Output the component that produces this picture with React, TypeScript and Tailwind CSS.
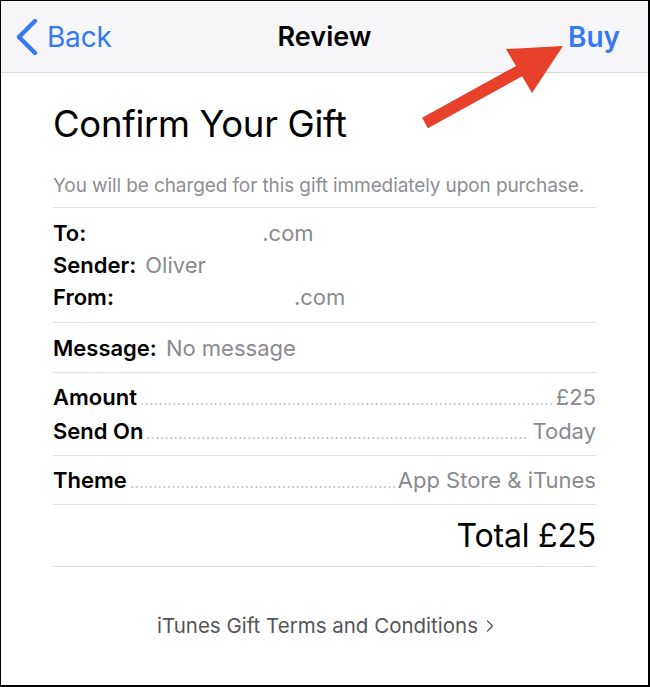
import { ChevronRight } from "lucide-react";

const Leader = () => (
    <span className="mx-[3px] h-[2px] flex-1 bg-[radial-gradient(circle,#b8b8bc_0.8px,transparent_1.15px)] bg-[length:4.6px_2px] bg-repeat-x" />
);

function LeaderRow({ label, value }: { label: string; value: string }) {
    return (
        <div className="flex items-baseline">
            <span className="font-semibold text-black">{label}</span>
            <Leader />
            <span className="text-[#8a8a8e]">{value}</span>
        </div>
    );
}

export default function App() {
    return (
        <div className="relative h-[687px] w-[650px] overflow-hidden border-t border-r-2 border-b-2 border-l border-black bg-white font-['Inter',sans-serif] antialiased">
            <header className="relative flex h-[72px] items-center border-b border-[#d9d9dc] bg-[#f6f6f8]">
                <button type="button" className="ml-[14px] flex items-center text-[#3478f6]">
                    <svg width="24" height="38" viewBox="0 0 24 38" aria-hidden="true">
                        <polyline
                            points="20,3 4,19 20,35"
                            fill="none"
                            stroke="currentColor"
                            strokeWidth="4.4"
                            strokeLinecap="round"
                            strokeLinejoin="round"
                        />
                    </svg>
                    <span className="ml-[8px] text-[28px] leading-none tracking-[-0.2px]">Back</span>
                </button>
                <h1 className="absolute left-1/2 -translate-x-1/2 text-[27px] font-semibold leading-none text-black">Review</h1>
                <button type="button" className="ml-auto mr-[28px] text-[28px] font-semibold leading-none text-[#3478f6]">
                    Buy
                </button>
            </header>

            <main className="px-[52px]">
                <h2 className="mt-[29px] text-[36.5px] leading-[44px] tracking-[-0.3px] text-black">Confirm Your Gift</h2>

                <p className="mt-[29px] border-b border-[#e2e2e4] pb-[10px] text-[19px] leading-[22px] tracking-[-0.1px] text-[#8e8e93]">
                    You will be charged for this gift immediately upon purchase.
                </p>

                <div className="border-b border-[#e2e2e4] pt-[9px] pb-[9px] text-[22px] leading-[32px]">
                    <div className="flex">
                        <span className="font-semibold text-black">To:</span>
                        <span className="ml-[176px] text-[#8a8a8e]">.com</span>
                    </div>
                    <div className="flex">
                        <span className="font-semibold text-black">Sender:</span>
                        <span className="ml-[9px] text-[#8a8a8e]">Oliver</span>
                    </div>
                    <div className="flex">
                        <span className="font-semibold text-black">From:</span>
                        <span className="ml-[180px] text-[#8a8a8e]">.com</span>
                    </div>
                </div>

                <div className="border-b border-[#e2e2e4] pt-[9px] pb-[8px] text-[22px] leading-[32px]">
                    <span className="font-semibold text-black">Message:</span>
                    <span className="ml-[9px] text-[#8a8a8e]">No message</span>
                </div>

                <div className="border-b border-[#e2e2e4] pt-[7px] pb-[7px] text-[22px] leading-[34px]">
                    <LeaderRow label="Amount" value="£25" />
                    <LeaderRow label="Send On" value="Today" />
                </div>

                <div className="border-b border-[#e2e2e4] pt-[8px] pb-[8px] text-[22px] leading-[32px]">
                    <LeaderRow label="Theme" value="App Store & iTunes" />
                </div>

                <div className="border-b border-[#e2e2e4] pt-[11px] pb-[10px] text-right text-[32px] leading-[40px] tracking-[-0.2px] text-black">
                    Total £25
                </div>

                <a className="mt-[45px] ml-[8px] flex items-center justify-center text-[20.5px] leading-[28px] text-[#555558]">
                    iTunes Gift Terms and Conditions
                    <ChevronRight className="ml-[2px] size-[20px]" strokeWidth={1.5} aria-hidden="true" />
                </a>
            </main>

            <svg className="pointer-events-none absolute inset-0" width="650" height="687" aria-hidden="true">
                <line x1="424" y1="122" x2="522" y2="68" stroke="#e8412b" strokeWidth="12" />
                <polygon points="562,45 505,48 531,92" fill="#e8412b" />
            </svg>
        </div>
    );
}
